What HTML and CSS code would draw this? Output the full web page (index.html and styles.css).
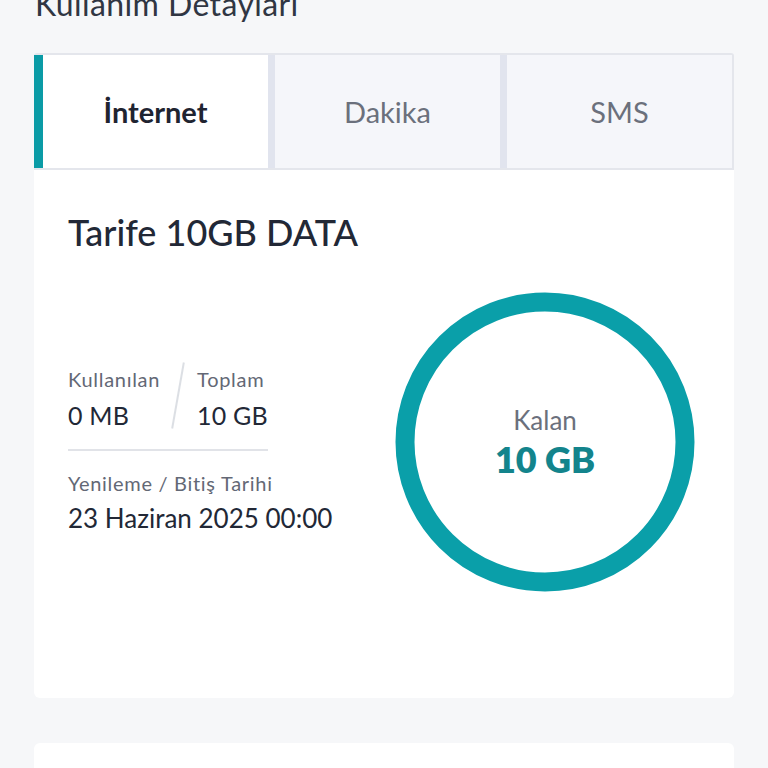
FILE: index.html
```html
<!DOCTYPE html>
<html lang="tr">
<head>
<meta charset="utf-8">
<link rel="stylesheet" href="styles.css">
</head>
<body>
<div class="page">
  <h2 class="section-title">Kullanım Detayları</h2>
  <div class="card">
    <div class="tabs">
      <div class="tab active">İnternet</div>
      <div class="tab">Dakika</div>
      <div class="tab">SMS</div>
    </div>
    <div class="card-body">
      <h3 class="plan-title">Tarife 10GB DATA</h3>
      <div class="usage">
        <div class="details">
          <div class="stats">
            <div class="stat">
              <div class="label">Kullanılan</div>
              <div class="value">0 MB</div>
            </div>
            <div class="slash"></div>
            <div class="stat">
              <div class="label">Toplam</div>
              <div class="value">10 GB</div>
            </div>
          </div>
          <div class="renew">
            <div class="label">Yenileme / Bitiş Tarihi</div>
            <div class="value date">23 Haziran 2025 00:00</div>
          </div>
        </div>
        <div class="ring">
          <svg width="300" height="300" viewBox="0 0 300 300">
            <circle cx="150" cy="150" r="140" fill="none" stroke="#0a9fa9" stroke-width="19"/>
          </svg>
          <div class="ring-text">
            <div class="ring-label">Kalan</div>
            <div class="ring-value">10 GB</div>
          </div>
        </div>
      </div>
    </div>
  </div>
  <div class="card next"></div>
</div>
</body>
</html>
```
FILE: styles.css
```css
html, body {
  margin: 0;
  padding: 0;
  background: #f6f7f9;
  font-family: "Lato", "Open Sans", sans-serif;
  color: #222836;
  overflow: hidden;
}
.page {
  padding: 0 34px;
}
.section-title {
  margin: -16px 0 0 1px;
  font-size: 32px;
  font-weight: 400;
  line-height: 40px;
  height: 40px;
  color: #303643;
  padding-bottom: 29px;
  letter-spacing: 0.4px;
}
.card {
  background: #fff;
  border-radius: 6px;
}
.tabs {
  display: flex;
  height: 117px;
  border: 2px solid #e4e6ec;
  border-radius: 3px 3px 0 0;
  border-left: none;
  box-sizing: border-box;
}
.tab {
  flex: 1;
  display: flex;
  align-items: center;
  justify-content: center;
  background: #f5f6fa;
  border-left: 7px solid #e1e4ee;
  font-size: 29px;
  color: #6b707c;
}
.tab.active {
  background: #fff;
  border-left: 9px solid #0a9ba6;
  color: #1f2431;
  font-weight: 700;
}
.card-body {
  padding: 40px 39px 106px 34px;
}
.plan-title {
  margin: 0;
  font-size: 36px;
  line-height: 44px;
  font-weight: 500;
  color: #222836;
}
.usage {
  display: flex;
  justify-content: space-between;
  align-items: center;
  margin-top: 38px;
}
.details {
  display: flex;
  flex-direction: column;
  margin-top: 14px;
}
.stats {
  display: flex;
  align-items: flex-start;
  align-self: flex-start;
  border-bottom: 2px solid #e1e3e8;
  padding-bottom: 19px;
}
.label {
  font-size: 20px;
  line-height: 26px;
  color: #636875;
  letter-spacing: 0.7px;
}
.value {
  font-size: 25px;
  line-height: 30px;
  margin-top: 8px;
  color: #222836;
  letter-spacing: 0.2px;
}
.slash {
  width: 2px;
  height: 67px;
  background: #dcdfe4;
  margin: -4px 18px 0 17px;
  transform: rotate(10deg);
}
.renew {
  margin-top: 19px;
}
.date {
  margin-top: 7px;
  font-size: 26px;
  letter-spacing: 0;
}
.ring {
  position: relative;
  width: 300px;
  height: 300px;
}
.ring svg {
  display: block;
}
.ring-text {
  position: absolute;
  inset: 0;
  display: flex;
  flex-direction: column;
  align-items: center;
  justify-content: center;
}
.ring-label {
  font-size: 26px;
  color: #6b707c;
  line-height: 30px;
}
.ring-value {
  font-size: 36px;
  font-weight: 800;
  color: #13848c;
  line-height: 40px;
  margin-top: 4px;
}
.next {
  margin-top: 45px;
  height: 100px;
}
```
